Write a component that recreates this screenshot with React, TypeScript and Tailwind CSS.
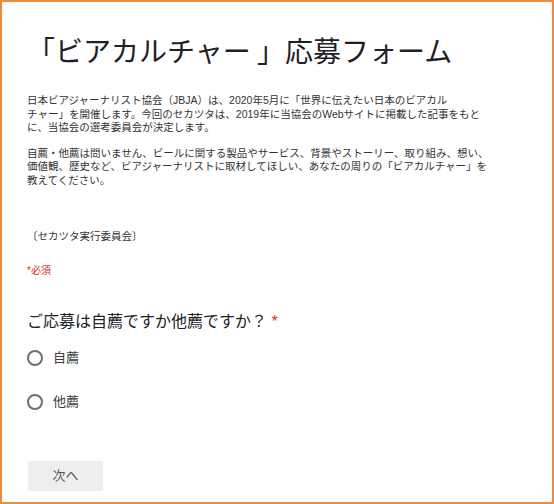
import React, { useState } from 'react';

const FONT = "font-['Liberation_Sans','Noto_Sans_CJK_JP',sans-serif]";

interface RadioOptionProps {
  label: string;
  checked: boolean;
  onSelect: () => void;
}

const RadioOption: React.FC<RadioOptionProps> = ({ label, checked, onSelect }) => (
  <button type="button" onClick={onSelect} className="flex items-center h-4 text-left">
    <span className="w-[16px] h-[16px] rounded-full border-2 border-[#6e6e6e] flex items-center justify-center">
      {checked && <span className="w-[8px] h-[8px] rounded-full bg-[#673ab7]" />}
    </span>
    <span className="ml-[10px] text-[13px] leading-4 text-[#3c3c3c]">{label}</span>
  </button>
);

const App: React.FC = () => {
  const [choice, setChoice] = useState<string | null>(null);

  return (
    <div className={`w-[554px] h-[504px] border-2 border-[#f28a3e] bg-white ${FONT}`}>
      <div className="pl-[25px] pr-4 pt-[31px]">
        <h1 className="text-[28px] leading-[34px] font-normal text-[#202124] whitespace-nowrap font-['Noto_Sans_CJK_JP',sans-serif]">
          「ビアカルチャー 」応募フォーム
        </h1>

        <div className="mt-[27px] text-[10.5px] leading-[13.5px] text-[#333333] whitespace-nowrap">
          <p>
            日本ビアジャーナリスト協会（JBJA）は、2020年5月に「世界に伝えたい日本のビアカル
            <br />
            チャー」を開催します。今回のセカツタは、2019年に当協会のWebサイトに掲載した記事をもと
            <br />
            に、当協会の選考委員会が決定します。
          </p>
          <p className="mt-3">
            自薦・他薦は問いません、ビールに関する製品やサービス、背景やストーリー、取り組み、想い、
            <br />
            価値観、歴史など、ビアジャーナリストに取材してほしい、あなたの周りの「ビアカルチャー」を
            <br />
            教えてください。
          </p>
          <p className="mt-[43px]">〔セカツタ実行委員会〕</p>
        </div>

        <p className="mt-[20px] text-[10px] leading-[13.5px] text-[#d93025]">*必須</p>

        <h2 className="mt-[34px] text-[16px] leading-[22px] text-[#202124]">
          ご応募は自薦ですか他薦ですか？ <span className="text-[#d93025]">*</span>
        </h2>

        <div className="mt-[17px] flex flex-col gap-[28px]">
          <RadioOption label="自薦" checked={choice === 'self'} onSelect={() => setChoice('self')} />
          <RadioOption label="他薦" checked={choice === 'other'} onSelect={() => setChoice('other')} />
        </div>

        <button
          type="button"
          className="mt-[51px] ml-[1px] w-[75px] h-[30px] rounded-[2px] bg-[#eeeeee] text-[13px] text-[#555555]"
        >
          次へ
        </button>
      </div>
    </div>
  );
};

export default App;
